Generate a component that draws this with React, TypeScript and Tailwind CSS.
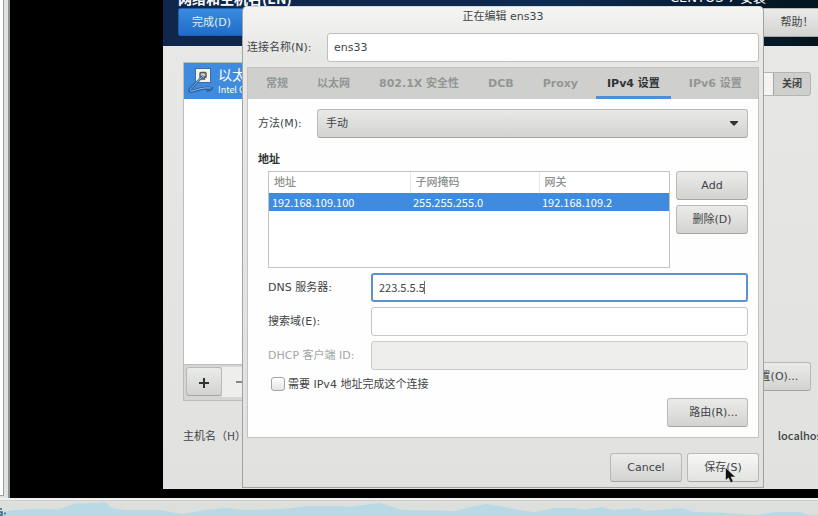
import { useState } from "react";
import type { ComponentProps, ReactNode } from "react";
import clsx from "clsx";

const TABS = ["常规", "以太网", "802.1X 安全性", "DCB", "Proxy", "IPv4 设置", "IPv6 设置"];

const ADDRESSES = [{ ip: "192.168.109.100", mask: "255.255.255.0", gateway: "192.168.109.2" }];

const cjk = "font-['Noto_Sans_CJK_SC',sans-serif]";

function Button({ className, ...props }: ComponentProps<"button">) {
  return (
    <button
      type="button"
      className={clsx(
        "h-[29px] shrink-0 rounded-[3px] border border-[#b9b9b7] border-b-[#a5a5a3] bg-linear-to-b from-[#ebebea] to-[#d3d3d2] pt-0.5 whitespace-nowrap text-[#3f4445]",
        className
      )}
      {...props}
    />
  );
}

function TextInput({ className, ...props }: ComponentProps<"input">) {
  return (
    <input
      type="text"
      className={clsx(
        "h-[29px] w-full min-w-0 rounded-[3px] border px-1.5 outline-none",
        "disabled:bg-[#eeeeed]",
        className
      )}
      {...props}
    />
  );
}

function Field({ id, label, muted, children }: { id: string; label: string; muted?: boolean; children: ReactNode }) {
  return (
    <div className="flex items-center">
      <label htmlFor={id} className={clsx("w-[103px] shrink-0 pt-0.5", muted && "text-[#a3a6a6]")}>
        {label}
      </label>
      <div className="relative min-w-0 flex-1">{children}</div>
    </div>
  );
}

function CableIcon() {
  return (
    <svg width="26" height="26" viewBox="0 0 26 26" fill="none" className="shrink-0">
      <path d="M14 9 2.500 20.500q-2.500 3.500 1 3l10-2.500q5-1 10-.5-1 2-5 2" stroke="#2c62a0" strokeWidth="2.500" />
      <rect x="7.500" y="0.500" width="15" height="14" fill="#f4f3ee" stroke="#3b6ea8" />
      <path d="M12 9V5.500q0-1 1-1h4q1 0 1 1V9h-1.500v2h-3V9z" fill="#c9c9c4" stroke="#55585a" strokeWidth="1.500" />
      <path d="M15 8 3 20.500q-2 3 1 2.500l9-2.500q5-1 10-.5" stroke="#2c62a0" strokeWidth="2.500" />
      <path d="M15 8 3 20.500q-2 3 1 2.500l9-2.500q5-1 10-.5" stroke="#8fb8e4" />
    </svg>
  );
}

function InstallerWindow() {
  return (
    <div className="col-start-1 row-start-1 flex min-w-0 flex-col overflow-hidden bg-linear-to-b from-[#e8e8e7] to-[#e1e1e0]">
      <header className="flex h-[46px] justify-between overflow-hidden bg-linear-to-r from-[#10264b] via-[#0d2a52] via-60% to-[#04151f] pl-[15px] text-white">
        <div>
          <h1 className={clsx("-mt-[10px] h-[18px] text-sm leading-4 font-bold", cjk)}>网络和主机名(EN)</h1>
          <button
            type="button"
            className="h-7 w-[86px] rounded-[2px] border border-[#1d5fae] bg-linear-to-b from-[#3a8be0] to-[#1f6dc6] pt-0.5 pr-[19px] text-[#e3effb]"
          >
            完成(D)
          </button>
        </div>
        <div className="-mr-3 flex flex-col items-end">
          <p className="-mt-[10px] mr-[64px] h-[18px] text-[13px] leading-4">CENTOS 7 安装</p>
          <Button className="h-7 w-[78px] pl-3">帮助！</Button>
        </div>
      </header>

      <div className="flex justify-between pt-4 pr-[7px] pl-5">
        <div className="w-[220px] border border-[#bdbdbb]">
          <div className="flex h-9 items-center gap-1 bg-[#3f8bde] pl-1 text-white">
            <CableIcon />
            <div>
              <p className="text-sm leading-[18px]">以太网</p>
              <p className={clsx("text-[9px] leading-3", cjk)}>Intel C</p>
            </div>
          </div>
          <div className="h-[265px] bg-white" />
          <div className="flex h-9 border-t border-[#bdbdbb] bg-[#d6d6d5] p-[2px]">
            <Button aria-label="添加" className="flex h-8 w-9 items-center justify-center">
              <svg width="10" height="10" stroke="#2e3436" strokeWidth="2">
                <path d="M5 0v10M0 5h10" />
              </svg>
            </Button>
            <button type="button" aria-label="移除" className="flex h-[30px] w-9 items-center justify-center bg-[#eeeeed]">
              <svg width="8" height="2" className="fill-[#85898a]">
                <rect width="8" height="2" />
              </svg>
            </button>
          </div>
        </div>
        <div className="flex flex-col items-end justify-between pt-[10px] pb-[10px]">
          <button
            type="button"
            role="switch"
            aria-checked="false"
            className="flex h-6 w-20 overflow-hidden rounded-[3px] border border-[#b4b4b2] bg-[#cfcfce] text-[10px] font-bold text-[#3f4445]"
          >
            <span className="h-full w-[42px] border-r border-[#a5a5a3] bg-[#f4f4f3]" />
            <span className="flex-1 leading-[22px]">关闭</span>
          </button>
          <Button className="w-[87px] pl-3">配置(O)...</Button>
        </div>
      </div>

      <div className="-mr-2 flex justify-between pt-[26px] pl-5">
        <span className={cjk}>主机名（H）</span>
        <span className={clsx("font-medium", cjk)}>localhost</span>
      </div>
    </div>
  );
}

function ConnectionDialog() {
  const [active, setActive] = useState("IPv4 设置");
  const [needed, setNeeded] = useState(false);

  return (
    <section
      role="dialog"
      aria-labelledby="dialog-title"
      className="z-10 col-start-1 row-start-1 mt-[6px] mr-[54px] mb-px ml-[79px] rounded-t-[5px] border border-[#a2a2a0] border-t-[#dadad9] bg-linear-to-b from-[#f4f4f3] via-[#e7e7e6] via-10% to-[#e1e1e0] px-1 pb-[5px] text-[#3f4445]"
    >
      <h2 id="dialog-title" className="h-[26px] text-center leading-5">
        正在编辑 ens33
      </h2>

      <div className="flex items-center">
        <label htmlFor="conn-name" className="w-20 shrink-0 pt-0.5">
          连接名称(N):
        </label>
        <TextInput id="conn-name" defaultValue="ens33" className="border-[#bfbfbd] bg-white" />
      </div>

      <div className="mt-[5px] border border-[#c3c3c1] bg-[#fdfefd]">
        <div role="tablist" className="flex h-[31px] gap-[7px] bg-[#cfcfce] px-[7px] font-bold">
          {TABS.map((tab) => (
            <button
              key={tab}
              type="button"
              role="tab"
              aria-selected={tab === active}
              onClick={() => setActive(tab)}
              className={clsx(
                "border-b-[3px] px-[11px] pt-[5px] whitespace-nowrap",
                tab === active ? "border-[#4a90d9] text-[#2e3436]" : "border-transparent text-[#929695]"
              )}
            >
              {tab}
            </button>
          ))}
        </div>

        <div className="p-[10px]">
          <div className="relative flex items-center">
            <label htmlFor="method" className="w-[59px] shrink-0 pt-0.5">
              方法(M):
            </label>
            <select
              id="method"
              className="h-[29px] min-w-0 flex-1 appearance-none rounded-[3px] border border-[#b9b9b7] border-b-[#a5a5a3] bg-linear-to-b from-[#e9e9e8] to-[#d3d3d2] px-2 pt-0.5 outline-none"
            >
              <option>手动</option>
              <option>自动(DHCP)</option>
            </select>
            <svg width="8" height="5" className="pointer-events-none absolute right-[10px] fill-[#2e3436]">
              <path d="M0 0h8v1L4 5 0 1z" />
            </svg>
          </div>

          <h3 className="mt-[14px] mb-[3px] leading-4 font-bold text-[#2e3436]">地址</h3>

          <div className="flex flex-col gap-[5px] pl-[10px]">
            <div className="flex gap-[6px]">
              <div className="h-[97px] min-w-0 flex-1 border border-[#c3c3c1] bg-white">
                <table className="w-full table-fixed border-collapse text-left leading-4">
                  <thead>
                    <tr className="h-[21px] text-[#8b8f8e]">
                      <th className="w-[141px] border-r border-[#e8e8e7] p-0 pl-[5px] font-medium">地址</th>
                      <th className="w-[129px] border-r border-[#e8e8e7] p-0 pl-[5px] font-medium">子网掩码</th>
                      <th className="p-0 pl-[5px] font-medium">网关</th>
                    </tr>
                  </thead>
                  <tbody className={cjk}>
                    {ADDRESSES.map((row) => (
                      <tr key={row.ip} className="h-[18px] bg-[#3f8bde] text-white">
                        <td className="p-0 pl-[3px]">{row.ip}</td>
                        <td className="p-0 pl-[3px]">{row.mask}</td>
                        <td className="p-0 pl-[3px]">{row.gateway}</td>
                      </tr>
                    ))}
                  </tbody>
                </table>
              </div>
              <div className="flex flex-col gap-[5px]">
                <Button className="w-[72px]">Add</Button>
                <Button className="w-[72px]">删除(D)</Button>
              </div>
            </div>

            <Field id="dns" label="DNS 服务器:">
              <TextInput
                id="dns"
                defaultValue="223.5.5.5"
                className={clsx("border-2 border-[#5b92d2] bg-white pb-0.5", cjk)}
              />
              <span className="absolute top-2 left-[53px] h-[13px] w-px bg-[#6b7071]" />
            </Field>
            <Field id="search" label="搜索域(E):">
              <TextInput id="search" className="border-[#c6c6c4] bg-white" />
            </Field>
            <Field id="dhcp" label="DHCP 客户端 ID:" muted>
              <TextInput id="dhcp" disabled className="border-[#c9c9c7]" />
            </Field>

            <label className="mt-[2px] flex h-[14px] items-center gap-[3px] pl-[3px]">
              <input
                type="checkbox"
                checked={needed}
                onChange={(e) => setNeeded(e.target.checked)}
                className="size-[14px] appearance-none rounded-[3px] border border-[#a4a4a2] bg-linear-to-b from-white to-[#e3e3e2] checked:bg-[#4a90d9]"
              />
              <span className="pt-0.5">需要 IPv4 地址完成这个连接</span>
            </label>
            <Button className="mt-[2px] w-[81px] self-end pl-3">路由(R)...</Button>
          </div>
        </div>
      </div>

      <div className="mt-[15px] flex justify-end gap-[5px]">
        <Button className="w-[72px]">Cancel</Button>
        <Button className="relative w-[72px] from-[#f8f8f7] to-[#e2e2e1]">
          保存(S)
          <svg width="12" height="17" viewBox="0 0 12 17" className="absolute top-[13px] left-[37px]">
            <path
              d="M0.500 0.500v13l3-2.600 2.200 4.800 2.600-1.200-2.200-4.500h4.400z"
              fill="#111"
              stroke="#e8e8e8"
              strokeWidth="0.600"
            />
          </svg>
        </Button>
      </div>
    </section>
  );
}

// cloud silhouette along the host desktop's bottom edge
function HostFooter() {
  return (
    <footer className="h-[18px] border-t-2 border-[#f0f0ef] bg-[#dddfdc]">
      <svg width="100%" height="16" viewBox="0 0 818 15" preserveAspectRatio="none" className="block border-t border-[#cfd0ce]">
        <path
          d="M0 11.500 14 9 40 7.500 58 8.500 68 5 75 2.500 98 2l7-1 7 6 13 2h35l22 4 23-4 20-2 20 2 35-1 30-3 40 .5L380 2l10 3 10 3.500 8 .5 47 1 15-4 16-3 14 2 22 4.500 13 1.500 20-4h20l10 1.500L602 6l11 3 25-2 7 3 37-3 12 4 26 .5 20 1.500 17 1 18-3h25l8 3h10v1H0z"
          fill="#b9dae4"
        />
        <path d="M0 8h2M0 11h2v3H0M5 11.500v2" stroke="#2f6684" strokeWidth="1.500" fill="none" />
      </svg>
    </footer>
  );
}

export default function App() {
  return (
    <div className="flex min-h-screen flex-col bg-black font-['DejaVu_Sans','Noto_Sans_CJK_SC',sans-serif] text-[11px] text-[#3f4445]">
      <div className="flex flex-1">
        <div className="w-[10px] shrink-0 border-r-2 border-[#8e9392] bg-[#dfe2e1]">
          <div className="h-[calc(100%-2px)] w-1 border-r border-b border-[#9a9e9d] bg-white" />
        </div>
        <main className="mb-[9px] ml-[153px] grid min-w-0 flex-1 grid-cols-[minmax(0,1fr)]">
          <InstallerWindow />
          <ConnectionDialog />
        </main>
      </div>
      <HostFooter />
    </div>
  );
}
